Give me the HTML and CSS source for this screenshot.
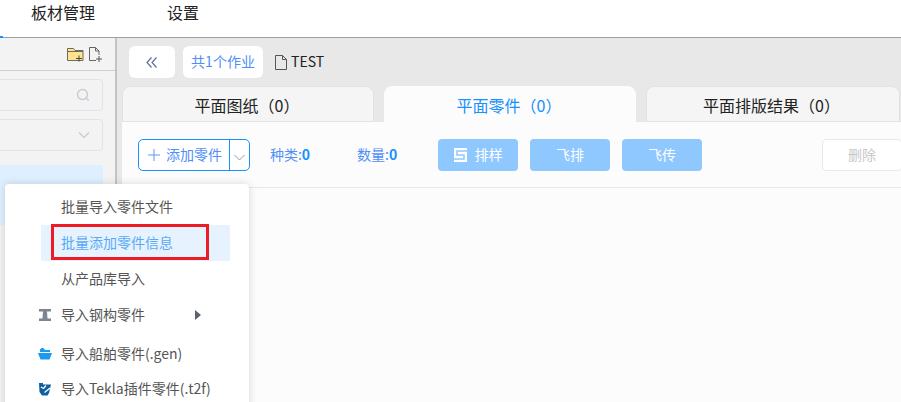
FILE: index.html
```html
<!DOCTYPE html>
<html lang="zh-CN">
<head>
    <meta charset="UTF-8">
    <meta name="viewport" content="width=device-width, initial-scale=1.0">
    <title>板材管理</title>
    <link rel="stylesheet" href="styles.css">
</head>
<body>
    <div class="topbar">
        <span class="nav-mark"></span>
        <a class="nav-item nav-first">板材管理</a>
        <a class="nav-item">设置</a>
    </div>

    <div class="workspace">
        <div class="sidebar">
            <div class="side-tools">
                <svg class="tool-icon" width="17" height="15" viewBox="0 0 17 15">
                    <path d="M.5 13.5V1.5h6l1.5 2h8v10z" fill="#ffe38f" stroke="#6b6b5e"/>
                    <path d="M1 4.5h15" stroke="#6b6b5e"/>
                    <path d="M12 8.5v6M9 11.5h6" stroke="#444" stroke-width="1" fill="none"/>
                </svg>
                <svg class="tool-icon" width="14" height="15" viewBox="0 0 14 15">
                    <path d="M7 13.5H.5V.5h6l3.500 3.500V8M6.500.5V4h3.500" fill="none" stroke="#666"/>
                    <path d="M10 9v6M7 12h6" stroke="#555" fill="none"/>
                </svg>
            </div>
            <div class="side-field">
                <svg width="14" height="14" viewBox="0 0 14 14" fill="none" stroke="#c5cad3" stroke-width="1.300">
                    <circle cx="6.500" cy="6.500" r="5"/>
                    <path d="M10.300 10.300l2.500 2.500"/>
                </svg>
            </div>
            <div class="side-field">
                <svg width="12" height="8" viewBox="0 0 12 8" fill="none" stroke="#c5cad3" stroke-width="1.200">
                    <path d="M1 1.500l5 5 5-5"/>
                </svg>
            </div>
            <div class="side-row"></div>
        </div>

        <div class="main">
            <div class="job-bar">
                <button class="job-btn job-back">
                    <svg width="12" height="11" viewBox="0 0 12 11" fill="none" stroke="#5f6f96" stroke-width="1.200">
                        <path d="M5.500.5L1 5.500l4.500 5M10.500.5L6 5.500l4.500 5"/>
                    </svg>
                </button>
                <button class="job-btn job-count">共1个作业</button>
                <svg class="job-doc" width="12" height="15" viewBox="0 0 12 15" fill="none" stroke="#555">
                    <path d="M.5.500h7l4 4v10H.5zM7.500.5v4h4"/>
                </svg>
                <span class="job-name">TEST</span>
            </div>

            <div class="tabs">
                <div class="tab">平面图纸（0）</div>
                <div class="tab active">平面零件（0）</div>
                <div class="tab">平面排版结果（0）</div>
            </div>

            <div class="panel">
                <div class="toolbar">
                    <div class="add-group">
                        <button class="add-main">
                            <svg width="12" height="12" viewBox="0 0 12 12" stroke="#5a9cf5" fill="none"><path d="M6 0v12M0 6h12"/></svg>
                            添加零件
                        </button>
                        <button class="add-drop">
                            <svg width="11" height="7" viewBox="0 0 11 7" fill="none" stroke="#8a9bb5"><path d="M.5 1l5 5 5-5"/></svg>
                        </button>
                    </div>
                    <span class="stat stat-kind">种类:<b>0</b></span>
                    <span class="stat stat-qty">数量:<b>0</b></span>
                    <button class="btn-soft">
                        <svg width="13" height="14" viewBox="0 0 13 14">
                            <path d="M0 0h13v14H0z" fill="#fff"/>
                            <path d="M13 3H3v4h7v4H0" fill="none" stroke="#8fc7ff" stroke-width="1.500"/>
                        </svg>
                        排样
                    </button>
                    <button class="btn-soft">飞排</button>
                    <button class="btn-soft">飞传</button>
                    <button class="btn-delete">删除</button>
                </div>
            </div>
        </div>
    </div>

    <div class="import-menu">
        <div class="menu-item">批量导入零件文件</div>
        <div class="menu-item hover">
            批量添加零件信息
            <span class="red-mark"></span>
        </div>
        <div class="menu-item">从产品库导入</div>
        <div class="menu-item">
            <svg class="menu-icon" width="14" height="12" viewBox="0 0 14 12">
                <path d="M1 0h12v2.500H9l.5 7H13V12H1V9.500h3.500l.5-7H1z" fill="#7d8591"/>
            </svg>
            导入钢构零件
            <span class="menu-arrow"></span>
        </div>
        <div class="menu-item tall">
            <svg class="menu-icon" width="14" height="12" viewBox="0 0 14 12">
                <path d="M2 4V1.500L3.500 0h2L7 2h5v2z" fill="#1b9af0"/>
                <path d="M0 5h14l-2.500 6.500h-9z" fill="#1b9af0"/>
            </svg>
            导入船舶零件(.gen)
        </div>
        <div class="menu-item">
            <svg class="menu-icon" width="14" height="14" viewBox="0 0 14 14">
                <path d="M1 1h4v1.500h8L11 11l-1.500 2.500H4L1.500 10z" fill="#0f5f9e"/>
                <path d="M3 5l2.500 1.500L8 3.500M6.500 10.500L12 6" fill="none" stroke="#fff" stroke-width="1.300"/>
            </svg>
            导入Tekla插件零件(.t2f)
        </div>
    </div>
</body>
</html>
```

FILE: styles.css
```css
* {
    box-sizing: border-box;
}
body {
    margin: 0;
    height: 402px;
    overflow: hidden;
    position: relative;
    font-family: "Noto Sans CJK SC", "Noto Sans", sans-serif;
    font-size: 14px;
    color: #333;
    background-color: #e8e8e8;
}
button {
    font-family: inherit;
    font-size: 14px;
    border: none;
    padding: 0;
}

/* top navigation */
.topbar {
    position: relative;
    display: flex;
    height: 38px;
    padding-left: 31px;
    background: #fff;
    border-bottom: 1px solid #a0a0a0;
}
.nav-item {
    font-size: 16px;
    line-height: 24px;
    color: #222;
}
.nav-first {
    margin-right: 72px;
}
.nav-mark {
    position: absolute;
    left: 0;
    bottom: -1px;
    width: 3px;
    height: 2px;
    background: #1890ff;
}

.workspace {
    display: flex;
    height: 364px;
}

/* left side */
.sidebar {
    flex: 0 0 117px;
    background: #f3f3f3;
    border-right: 2px solid #c4c4c4;
}
.side-tools {
    display: flex;
    justify-content: flex-end;
    align-items: center;
    gap: 5px;
    height: 33px;
    padding: 0 12px 0 0;
    border-bottom: 1px solid #cfcfcf;
}
.side-field {
    display: flex;
    justify-content: flex-end;
    align-items: center;
    width: 103px;
    height: 32px;
    margin-top: 8px;
    padding-right: 12px;
    background: #f3f3f3;
    border: 1px solid #e2e2e8;
    border-left: none;
    border-radius: 0 4px 4px 0;
}
.side-row {
    width: 103px;
    height: 60px;
    margin-top: 14px;
    background: #deefff;
}

/* right side */
.main {
    flex: 1;
    min-width: 0;
    padding-left: 5px;
}
.job-bar {
    display: flex;
    align-items: center;
    height: 48px;
    padding: 0 0 0 7px;
}
.job-btn {
    height: 32px;
    background: #fff;
    border-radius: 6px;
    display: flex;
    align-items: center;
    justify-content: center;
}
.job-back {
    width: 46px;
    margin-right: 8px;
}
.job-count {
    width: 80px;
    margin-right: 12px;
    padding-bottom: 2px;
    color: #4f8ff7;
}
.job-name {
    margin: 0 0 2px 4px;
    color: #222;
}

.tabs {
    display: flex;
    gap: 10px;
    height: 36px;
}
.tab {
    flex: 0 0 252px;
    padding-right: 2px;
    text-align: center;
    font-size: 16px;
    line-height: 36px;
    color: #222;
    background: #f5f5f5;
    border: 1px solid #e2e2e8;
    border-radius: 8px 8px 0 0;
}
.tab:last-child {
    flex-basis: 254px;
    padding-right: 3px;
}
.tab.active {
    color: #1890ff;
    background: #fcfcfc;
    border-color: #fcfcfc;
}

.panel {
    height: 280px;
    margin-right: -1px;
    background: #fcfcfc;
}
.toolbar {
    display: flex;
    align-items: center;
    height: 66px;
    padding-left: 16px;
    border-bottom: 1px solid #e8e8e8;
    white-space: nowrap;
}
.add-group {
    display: flex;
    width: 112px;
    height: 32px;
    border: 1px solid #1890ff;
    border-radius: 5px;
    background: #fff;
}
.add-main {
    flex: 1;
    display: flex;
    align-items: center;
    gap: 6px;
    padding: 0 0 2px 9px;
    color: #4f8ff7;
    background: none;
    border-right: 1px solid #1890ff;
}
.add-main svg {
    margin-top: 2px;
}
.add-drop {
    width: 19px;
    background: none;
}
.stat {
    margin-bottom: 2px;
    color: #4f8ff7;
}
.stat b {
    color: #1890ff;
}
.stat-kind {
    margin-left: 20px;
}
.stat-qty {
    margin-left: 47px;
}
.btn-soft {
    display: flex;
    align-items: center;
    justify-content: center;
    gap: 8px;
    width: 80px;
    height: 32px;
    margin-right: 12px;
    padding-bottom: 2px;
    color: #fff;
    background: #8fc7ff;
    border-radius: 4px;
}
.btn-soft svg {
    margin-top: 2px;
}
.stat-qty + .btn-soft {
    margin-left: 41px;
}
.btn-delete {
    flex: 0 0 80px;
    height: 32px;
    margin-left: 108px;
    padding-bottom: 2px;
    color: #c8c8c8;
    background: #fff;
    border: 1px solid #e8e8f0;
    border-radius: 4px;
}

/* dropdown over the page */
.import-menu {
    position: absolute;
    left: 5px;
    top: 184px;
    width: 244px;
    height: 230px;
    padding: 5px 19px 0 36px;
    background: #fff;
    border-radius: 4px;
    box-shadow: 0 0 8px rgba(0, 0, 0, 0.15);
}
.menu-item {
    position: relative;
    display: flex;
    align-items: center;
    height: 36px;
    padding: 0 0 2px 20px;
    color: #555;
    white-space: nowrap;
}
.menu-item.tall {
    height: 38px;
    padding-top: 2px;
    padding-bottom: 0;
}
.menu-item.hover {
    color: #5aa9f7;
    background: #e6f3ff;
}
.menu-icon {
    flex: none;
    margin: 2px 9px 0 -23px;
}
.menu-arrow {
    margin: 2px 0 0 50px;
    border-left: 6px solid #5a6270;
    border-top: 5px solid transparent;
    border-bottom: 5px solid transparent;
}
.red-mark {
    position: absolute;
    left: 10px;
    top: -1px;
    width: 158px;
    height: 36px;
    border: 3px solid #ed1c24;
}
```
